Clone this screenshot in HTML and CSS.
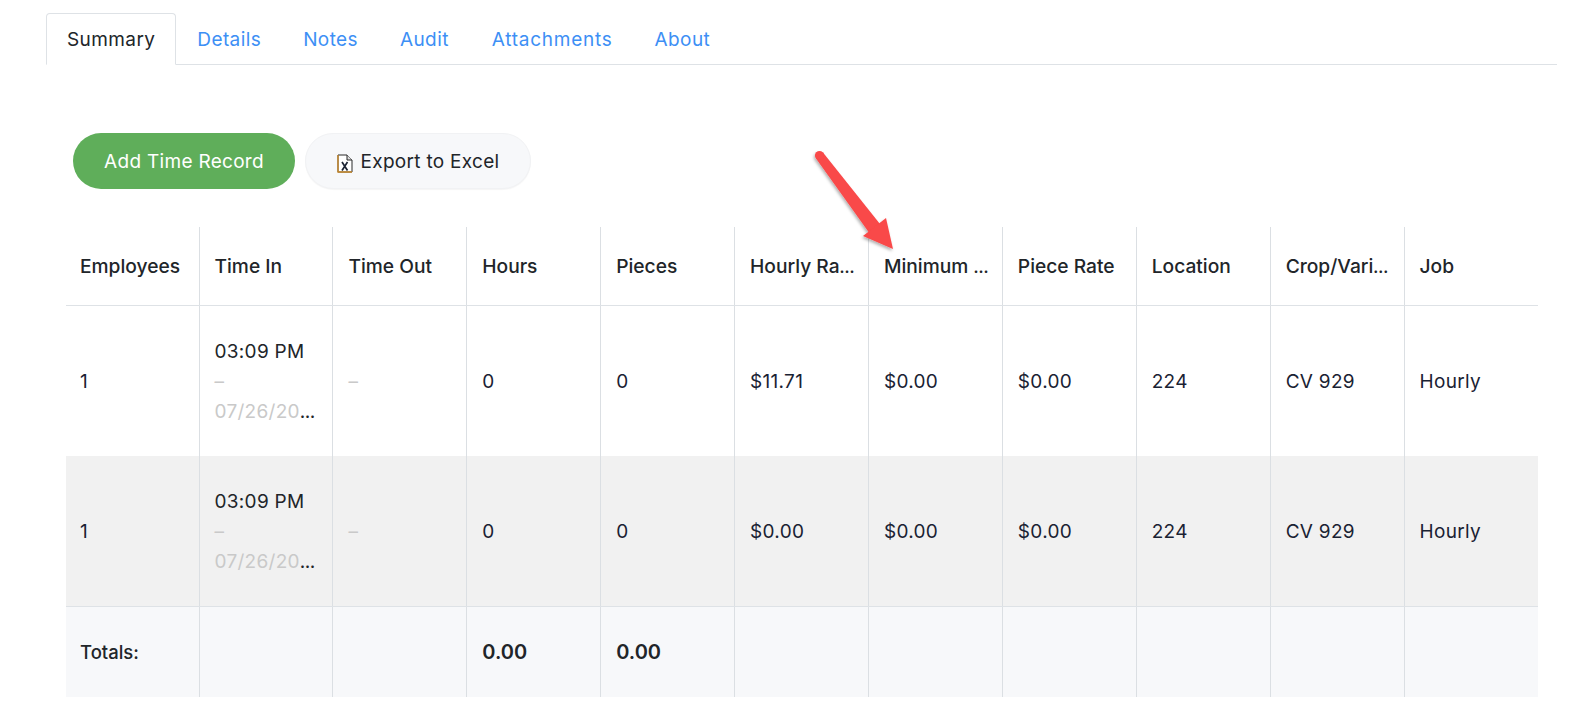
FILE: index.html
```html
<!DOCTYPE html>
<html lang="en">
<head>
<meta charset="utf-8">
<title>Summary</title>
<link rel="stylesheet" href="styles.css">
</head>
<body>
<nav class="tabs">
  <a class="tab active">Summary</a>
  <a class="tab">Details</a>
  <a class="tab">Notes</a>
  <a class="tab">Audit</a>
  <a class="tab tab-long">Attachments</a>
  <a class="tab">About</a>
</nav>
<div class="actions">
  <button class="btn btn-green">Add Time Record</button>
  <button class="btn btn-light">
    <svg class="xls" width="16" height="19" viewBox="0 0 16 19"><path d="M1 1h9l5 5v12H1z" fill="#fff" stroke="#2b2b2b"/><path d="M1 1v17h14" fill="none" stroke="#c98a2b" stroke-width="1.4"/><path d="M10 1v5h5" fill="#ddd" stroke="#2b2b2b"/><path d="M5 8l5.5 8.5M10.5 8L5 16.5" stroke="#1c2333" stroke-width="1.7"/></svg>
    <span>Export to Excel</span>
  </button>
</div>
<table class="grid">
  <thead>
    <tr><th>Employees</th><th>Time In</th><th>Time Out</th><th>Hours</th><th>Pieces</th><th>Hourly Ra<span class="dots">…</span></th><th>Minimum <span class="dots">…</span></th><th>Piece Rate</th><th>Location</th><th>Crop/Vari<span class="dots">…</span></th><th>Job</th></tr>
  </thead>
  <tbody>
    <tr>
      <td>1</td>
      <td><div class="line">03:09 PM</div><div class="line muted">–</div><div class="line"><span class="muted">07/26/20</span><span class="dots">…</span></div></td>
      <td class="muted">–</td><td>0</td><td>0</td><td>$11.71</td><td>$0.00</td><td>$0.00</td><td>224</td><td>CV 929</td><td>Hourly</td>
    </tr>
    <tr class="alt">
      <td>1</td>
      <td><div class="line">03:09 PM</div><div class="line muted">–</div><div class="line"><span class="muted">07/26/20</span><span class="dots">…</span></div></td>
      <td class="muted">–</td><td>0</td><td>0</td><td>$0.00</td><td>$0.00</td><td>$0.00</td><td>224</td><td>CV 929</td><td>Hourly</td>
    </tr>
  </tbody>
  <tfoot>
    <tr><td>Totals:</td><td></td><td></td><td class="big">0.00</td><td class="big">0.00</td><td></td><td></td><td></td><td></td><td></td><td></td></tr>
  </tfoot>
</table>
<svg class="arrow" width="110" height="120" viewBox="0 0 110 120">
  <defs><filter id="s" x="-20%" y="-20%" width="140%" height="140%"><feDropShadow dx="-1" dy="2" stdDeviation="1.5" flood-color="#000" flood-opacity=".3"/></filter></defs>
  <g filter="url(#s)" fill="#f94848">
    <path d="M16 12.5 L23 6.5 L80 78 L70 88 Z"/>
    <circle cx="19.5" cy="9.5" r="4.6"/>
    <path d="M93 103 L63 90 L86 72 Z"/>
  </g>
</svg>
</body>
</html>
```
FILE: styles.css
```css
* { box-sizing: border-box; }
html, body { margin: 0; height: 100%; overflow: hidden; background: #fff; }
body {
  position: relative;
  padding: 13px 12px 0 46px;
  font-family: "Inter", "Noto Sans", sans-serif;
  font-size: 19px;
  letter-spacing: .3px;
  color: #1a2233;
}
.tabs {
  display: flex;
  height: 52px;
  border-bottom: 1px solid #dee2e6;
  letter-spacing: .4px;
}
.tab {
  display: flex;
  align-items: center;
  height: 52px;
  padding: 0 20px;
  color: #3d8ff5;
  border: 1px solid transparent;
  border-radius: 4px 4px 0 0;
}
.tab-long { letter-spacing: .75px; margin-left: 1px; }
.tab.active {
  color: #212529;
  background: #fff;
  border-color: #dee2e6 #dee2e6 #fff;
}
.actions {
  display: flex;
  gap: 10px;
  margin: 68px 0 38px 27px;
}
.btn {
  display: flex;
  align-items: center;
  justify-content: center;
  height: 56px;
  border-radius: 28px;
  font: inherit;
  letter-spacing: inherit;
  border: 1px solid transparent;
}
.btn-green { width: 222px; background: #5fae5a; color: #fff; }
.btn-light { width: 226px; gap: 8px; background: #f7f8fa; color: #212529; border-color: #f1f2f4; box-shadow: 0 1px 1px rgba(0,0,0,.04); }
.xls { margin-top: 5px; }
.grid {
  width: 1472px;
  margin-left: 20px;
  border-collapse: collapse;
  table-layout: fixed;
}
.grid th, .grid td {
  padding: 0 15px;
  border-left: 1px solid #dbdfe3;
  text-align: left;
  white-space: nowrap;
  overflow: hidden;
  vertical-align: middle;
}
.grid th:first-child, .grid td:first-child { border-left: 0; padding-left: 14px; }
.grid th:first-child { width: 133px; }
.grid th {
  height: 78px;
  padding: 1px 10px 0 15px;
  font-size: 19.2px;
  font-weight: 500;
  letter-spacing: 0;
  color: #212529;
  border-bottom: 1px solid #dee2e6;
}
.grid tbody td { padding-top: 1px; }
.grid tbody tr { height: 150px; }
.grid tbody tr:first-child { height: 151px; }
.alt td { background: #f1f1f1; border-bottom: 1px solid #dee2e6; }
.grid tfoot tr { height: 91px; }
.grid tfoot td { padding-top: 1px; background: #f7f8fa; font-size: 18.5px; font-weight: 500; letter-spacing: 0; color: #212529; }
.grid td.big { font-size: 20px; font-weight: 600; }
.line { height: 30px; line-height: 32px; color: #212529; }
.dots { font-size: 15px; font-weight: 700; letter-spacing: 0; color: #212529; }
.muted { color: #c9c9c9; }
.grid td.muted { color: #c9c9c9; }
.arrow { position: absolute; left: 800px; top: 146px; }
```
